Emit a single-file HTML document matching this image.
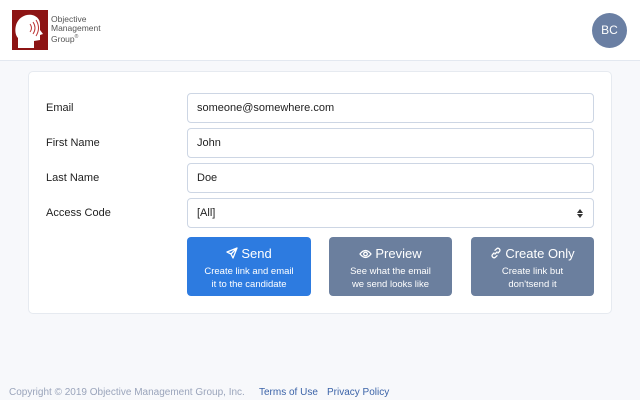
<!DOCTYPE html>
<html><head><meta charset="utf-8"><style>
*{box-sizing:border-box;margin:0;padding:0}
body{width:640px;height:400px;background:#f7f8fb;font-family:"Liberation Sans",sans-serif;position:relative;overflow:hidden}
.hdr{position:absolute;left:0;top:0;width:640px;height:61px;background:#fff;border-bottom:1px solid #e3e8f0}
.logo{position:absolute;left:12px;top:10px;width:36px;height:40px;background:#8d1414}
.lt{position:absolute;left:51px;top:15px;font-size:8.5px;line-height:9px;color:#555}
.av{position:absolute;left:592px;top:13px;width:35px;height:35px;border-radius:50%;background:#6a7fa3;color:#fff;font-size:12px;text-align:center;line-height:35px}
.card{position:absolute;left:28px;top:71px;width:584px;height:243px;background:#fff;border:1px solid #e6eaf0;border-radius:5px}
.lbl{position:absolute;left:46px;font-size:11px;color:#222}
.in{position:absolute;left:187px;width:407px;height:30px;border:1px solid #cdd6e4;border-radius:4px;font-size:11px;color:#222;padding-left:9px;line-height:28px}
.btn{position:absolute;top:237px;height:59px;border-radius:4px;color:#fff;text-align:center;background:#6b7f9e}
.btn b{display:block;font-weight:normal;font-size:13px;margin-top:9px;line-height:16px}
.btn b svg{vertical-align:-1px;margin-right:3px}
.btn span{display:block;font-size:9.5px;line-height:13px;margin-top:3px}
.ft{position:absolute;top:387px;font-size:10px;color:#9aa4bb}
</style></head><body>
<div class="hdr">
<div class="logo"><svg width="36" height="40" viewBox="0 0 36 40"><path d="M6 38 L6 28 C2 24 2 12 10 7 C18 2 28 6 28 14 L28 20 L31 24 L28 25 L28 30 L22 31 L22 38Z" fill="#fff"/><g fill="none" stroke="#b33" stroke-width="1"><path d="M18 14 q3 4 0 8"/><path d="M21 12 q4 6 0 12"/><path d="M24 10 q5 8 0 16"/></g></svg></div>
<div class="lt">Objective<br>Management<br>Group<sup style="font-size:5px">®</sup></div>
<div class="av">BC</div>
</div>
<div class="card"></div>
<div class="lbl" style="top:102px">Email</div>
<div class="lbl" style="top:137px">First Name</div>
<div class="lbl" style="top:172px">Last Name</div>
<div class="lbl" style="top:207px">Access Code</div>
<div class="in" style="top:93px">someone@somewhere.com</div>
<div class="in" style="top:128px">John</div>
<div class="in" style="top:163px">Doe</div>
<div class="in" style="top:198px">[All]<svg style="position:absolute;right:10px;top:10px" width="6" height="9" viewBox="0 0 6 9"><path d="M0 4L3 0L6 4ZM0 5L3 9L6 5Z" fill="#333"/></svg></div>
<div class="btn" style="left:187px;width:124px;background:#2d7be0"><b><svg width="12" height="12" viewBox="0 0 12 12"><path d="M11 1L1 5L5 7L7 11Z M5 7L11 1" fill="none" stroke="#fff" stroke-width="1.3" stroke-linejoin="round"/></svg>Send</b><span>Create link and email<br>it to the candidate</span></div>
<div class="btn" style="left:329px;width:123px"><b><svg width="13" height="10" viewBox="0 0 13 10"><path d="M1 5Q6.5 -2 12 5Q6.5 12 1 5Z" fill="none" stroke="#fff" stroke-width="1.3"/><circle cx="6.5" cy="5" r="1.8" fill="none" stroke="#fff" stroke-width="1.3"/></svg>Preview</b><span>See what the email<br>we send looks like</span></div>
<div class="btn" style="left:471px;width:123px"><b><svg width="12" height="12" viewBox="0 0 12 12"><path d="M5 7L7 5M4 6L2.5 7.5a2 2 0 0 0 2.8 2.8L7 8.7M8 6L9.5 4.5a2 2 0 0 0-2.8-2.8L5 3.3" fill="none" stroke="#fff" stroke-width="1.3" stroke-linecap="round"/></svg>Create Only</b><span>Create link but<br>don'tsend it</span></div>
<div class="ft" style="left:9px">Copyright © 2019 Objective Management Group, Inc.</div>
<div class="ft" style="left:259px;color:#3b63a8">Terms of Use</div>
<div class="ft" style="left:327px;color:#3b63a8">Privacy Policy</div>
</body></html>
